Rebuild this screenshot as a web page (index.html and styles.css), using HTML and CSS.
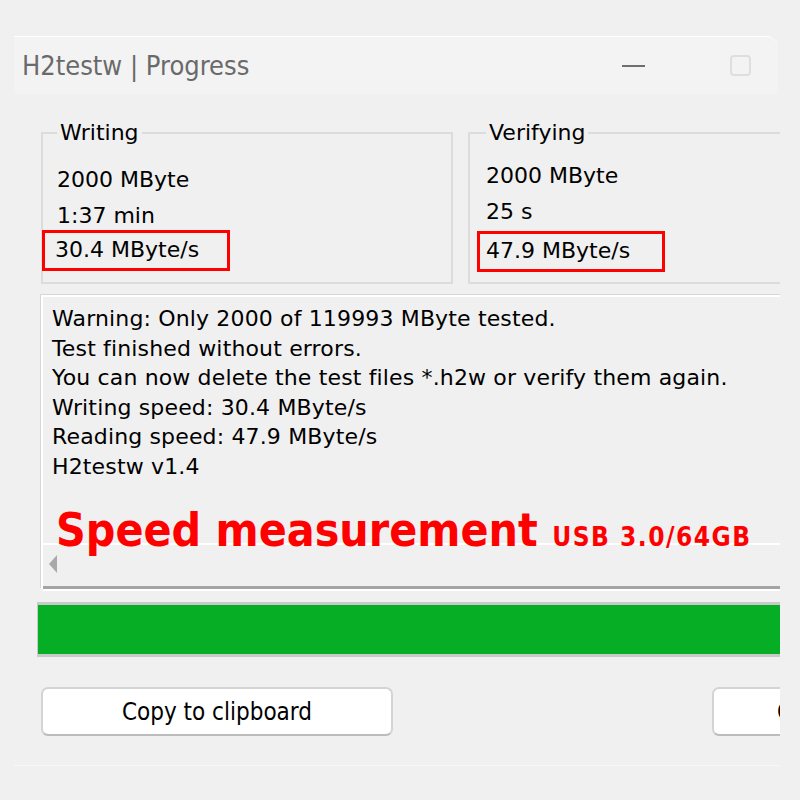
FILE: index.html
```html
<!DOCTYPE html>
<html lang="en">
<head>
    <meta charset="UTF-8">
    <meta name="viewport" content="width=device-width, initial-scale=1.0">
    <title>H2testw | Progress</title>
    <link rel="stylesheet" href="styles.css">
</head>
<body>

    <!-- Dialog window, cut off on the right like the screenshot -->
    <div class="window">

        <div class="titlebar">
            <span class="title">H2testw | Progress</span>
            <span class="btn-min"></span>
            <span class="btn-max"></span>
        </div>

        <div class="content">

            <div class="groups">
                <fieldset class="group group-write">
                    <legend>Writing</legend>
                    <div class="stat">2000 MByte</div>
                    <div class="stat">1:37 min</div>
                    <div class="stat mark">30.4 MByte/s</div>
                </fieldset>
                <fieldset class="group group-verify">
                    <legend>Verifying</legend>
                    <div class="stat">2000 MByte</div>
                    <div class="stat">25 s</div>
                    <div class="stat mark">47.9 MByte/s</div>
                </fieldset>
            </div>

            <div class="log">
                <div class="log-text">
                    <div>Warning: Only 2000 of 119993 MByte tested.</div>
                    <div>Test finished without errors.</div>
                    <div>You can now delete the test files *.h2w or verify them again.</div>
                    <div>Writing speed: 30.4 MByte/s</div>
                    <div>Reading speed: 47.9 MByte/s</div>
                    <div>H2testw v1.4</div>
                </div>
                <div class="hscroll">
                    <span class="arrow-left"></span>
                </div>
                <!-- annotation drawn over the log -->
                <div class="caption">Speed measurement <small>USB 3.0/64GB</small></div>
            </div>

            <div class="progress"></div>

            <div class="buttons">
                <button class="btn">Copy to clipboard</button>
                <button class="btn btn-cut">Close</button>
            </div>

        </div>
    </div>

</body>
</html>
```

FILE: styles.css
```css
/* Basic reset */
* {
    margin: 0;
    padding: 0;
    box-sizing: border-box;
}

body {
    background: #f0f0f0;
    font-family: 'DejaVu Sans', sans-serif;
    color: #000;
    overflow: hidden;
}

/* Window frame */
.window {
    margin: 36px 0 0 14px;
    width: 766px;
    height: 730px;
    overflow: hidden;
    border-bottom: 1px solid #f7f7f7;
}

.titlebar {
    height: 58px;
    margin-right: 2px;
    display: flex;
    align-items: center;
    background: #f3f3f3;
    border-top: 1px solid #fff;
    border-top-right-radius: 12px;
    padding: 0 0 0 8px;
}

.title {
    font-family: 'DejaVu Sans Condensed', 'DejaVu Sans', sans-serif;
    font-size: 27px;
    color: #6a6a6a;
    flex: 1;
}

.btn-min {
    width: 23px;
    height: 2px;
    background: #6e6e6e;
    margin-right: 85px;
}

.btn-max {
    width: 21px;
    height: 21px;
    border: 2px solid #dedede;
    border-radius: 4px;
    margin-right: 27px;
}

.content {
    padding-left: 27px;
    width: 900px;
}

/* Writing / Verifying panels */
.groups {
    display: flex;
    gap: 15px;
    margin-top: 26px;
}

.group {
    flex-shrink: 0;
    width: 412px;
    height: 164px;
    border: 2px solid #dcdcdc;
    padding: 0 0 0 14px;
    font-size: 22px;
}

.group-verify {
    padding-left: 16px;
}

.group legend {
    padding: 0 3px;
    line-height: 26px;
}

.stat {
    line-height: 36px;
}

.stat:first-of-type {
    margin-top: 16px;
}

.group-verify .stat:first-of-type {
    margin-top: 12px;
}

.mark {
    width: 188px;
    height: 41px;
    margin: -4px 0 0 -15px;
    padding-left: 10px;
    border: 3px solid #f00;
    line-height: 34px;
}

.group-verify .mark {
    margin: 1px 0 0 -9px;
    padding-left: 6px;
}

/* Log output */
.log {
    position: relative;
    margin-top: 11px;
    width: 860px;
    height: 294px;
    border-top: 2px solid #fff;
    border-left: 2px solid #fff;
    box-shadow: -1px -1px 0 #d6d6d6;
    display: flex;
    flex-direction: column;
}

.log-text {
    flex: 1;
    padding: 7px 0 0 9px;
    font-size: 22px;
    letter-spacing: 0.15px;
    line-height: 29.6px;
}

.hscroll {
    height: 46px;
    border-top: 2px solid #fff;
    border-bottom: 3px solid #a4a4a4;
    box-shadow: 0 2px 0 #fff;
    padding: 10px 0 0 6px;
}

.arrow-left {
    display: block;
    width: 0;
    height: 0;
    border-top: 9px solid transparent;
    border-bottom: 9px solid transparent;
    border-right: 8px solid #a8a8a8;
}

.caption {
    position: absolute;
    left: 13px;
    top: 206px;
    color: #f00;
    font-family: 'DejaVu Sans Condensed', 'DejaVu Sans', sans-serif;
    font-weight: bold;
    font-size: 46px;
    white-space: nowrap;
}

.caption small {
    font-size: 26px;
    letter-spacing: 1.5px;
}

/* Progress bar */
.progress {
    margin: 13px 0 0 -4px;
    width: 870px;
    height: 55px;
    border: 3px solid #c9c9c9;
    border-left-width: 1px;
    background: #06ae26;
}

/* Buttons */
.buttons {
    display: flex;
    gap: 319px;
    margin-top: 30px;
}

.btn {
    flex-shrink: 0;
    width: 352px;
    height: 49px;
    background: #fff;
    border: 2px solid #d4d4d4;
    border-bottom-color: #bcbcbc;
    border-radius: 7px;
    font-family: 'DejaVu Sans Condensed', 'DejaVu Sans', sans-serif;
    font-size: 24px;
    color: #000;
}

/* second button only peeks in from the right edge */
.btn-cut {
    text-align: left;
    padding-left: 63px;
}
```
